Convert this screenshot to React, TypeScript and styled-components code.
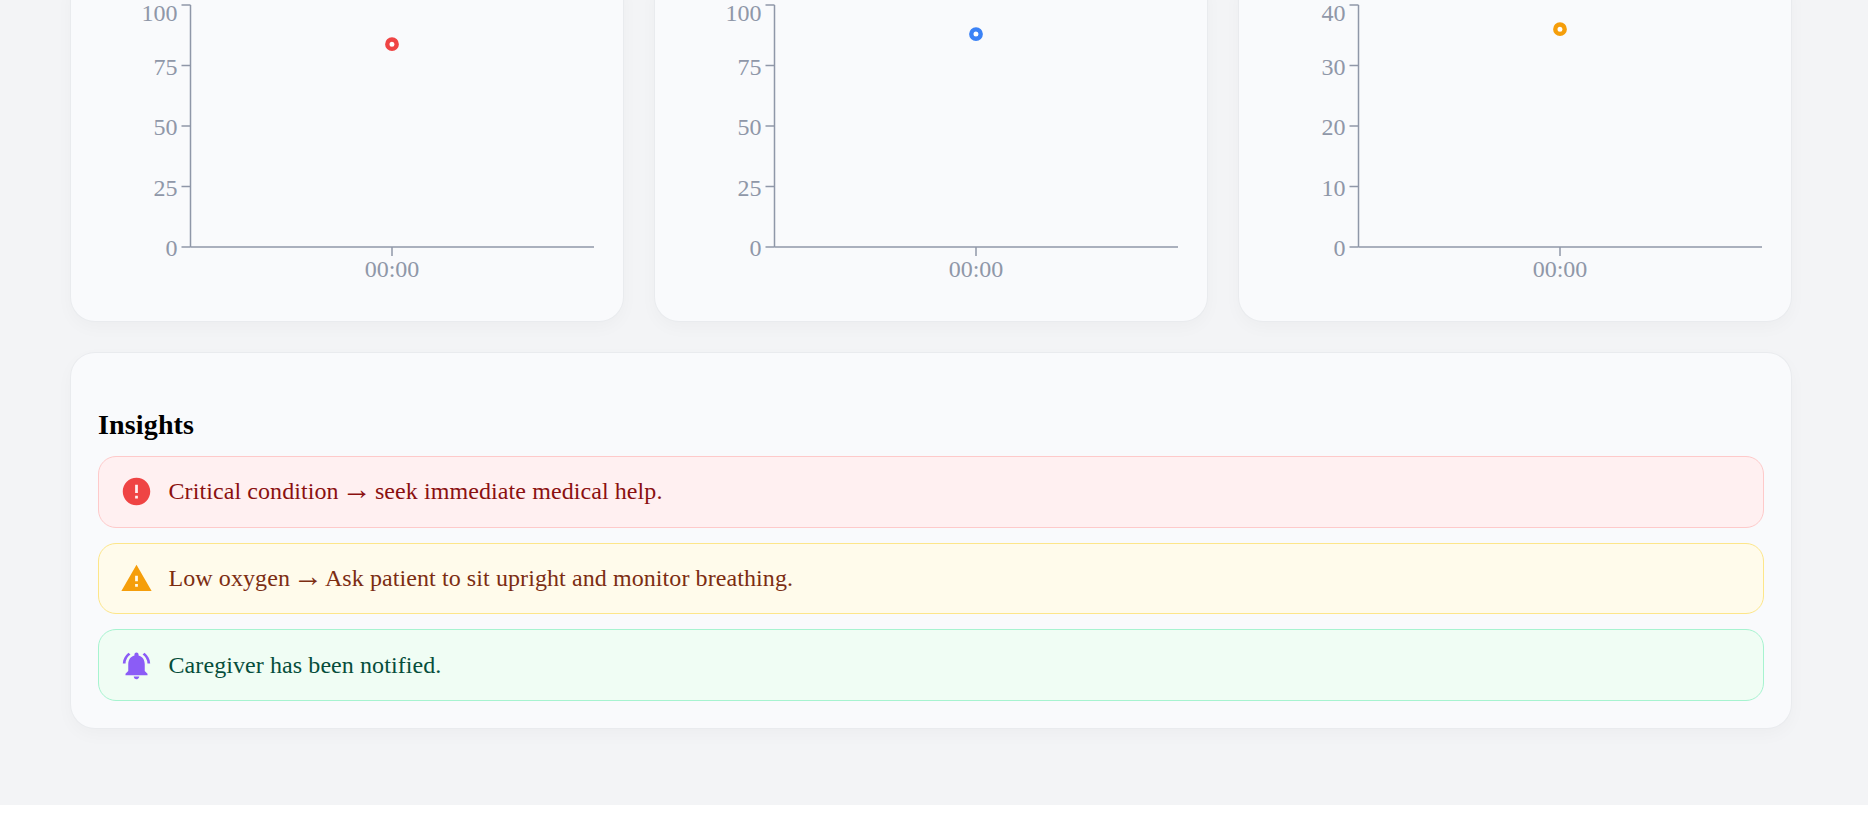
import styled, { createGlobalStyle } from "styled-components";
import { MdError, MdWarning, MdNotificationsActive } from "react-icons/md";

const GlobalStyle = createGlobalStyle`
  html, body {
    margin: 0;
    padding: 0;
    background: #fff;
  }
  body {
    font-family: "Liberation Serif", "Times New Roman", serif;
    overflow: hidden;
  }
`;

const AXIS = "#8f97a8";
const TOP = 5;
const BOTTOM = 247;
const AXIS_X = 92.5;
const AXIS_END = 496;
const POINT_X = 294;

type ChartProps = { max: number; step: number; value: number; color: string };

const Chart = ({ max, step, value, color }: ChartProps) => {
  const ticks: number[] = [];
  for (let t = 0; t <= max; t += step) ticks.push(t);
  const toY = (v: number) => BOTTOM - ((BOTTOM - TOP) * v) / max;

  return (
    <ChartSvg viewBox="0 0 498 294">
      <line x1={AXIS_X} y1={TOP} x2={AXIS_X} y2={BOTTOM} stroke={AXIS} strokeWidth={1.5} />
      <line x1={AXIS_X} y1={BOTTOM} x2={AXIS_END} y2={BOTTOM} stroke={AXIS} strokeWidth={1.5} />
      {ticks.map((t) => (
        <g key={t}>
          <line x1={AXIS_X - 9} y1={toY(t)} x2={AXIS_X} y2={toY(t)} stroke={AXIS} strokeWidth={1.5} />
          <TickLabel x={AXIS_X - 13} y={t === max ? toY(t) + 16 : toY(t) + 9} textAnchor="end">
            {t}
          </TickLabel>
        </g>
      ))}
      <line x1={POINT_X} y1={BOTTOM} x2={POINT_X} y2={BOTTOM + 9} stroke={AXIS} strokeWidth={1.5} />
      <TickLabel x={POINT_X} y={BOTTOM + 30} textAnchor="middle">
        00:00
      </TickLabel>
      <circle cx={POINT_X} cy={toY(value)} r={4.7} fill="#fff" stroke={color} strokeWidth={4.4} />
    </ChartSvg>
  );
};

const App = () => {
  return (
    <>
      <GlobalStyle />
      <Page>
        <ChartRow>
          <Card>
            <Chart max={100} step={25} value={83.8} color="#ef4444" />
          </Card>
          <Card>
            <Chart max={100} step={25} value={88} color="#3b82f6" />
          </Card>
          <Card>
            <Chart max={40} step={10} value={36} color="#f59e0b" />
          </Card>
        </ChartRow>
        <InsightsCard>
          <Heading>Insights</Heading>
          <AlertList>
            <Alert $bg="#fff0f1" $border="#fecaca" $text="#8b1010">
              <AlertIcon $color="#ef4444">
                <MdError />
              </AlertIcon>
              <span>
                Critical condition <Arrow>→</Arrow> seek immediate medical help.
              </span>
            </Alert>
            <Alert $bg="#fffbeb" $border="#fde68a" $text="#7c2d12">
              <AlertIcon $color="#f59e0b">
                <MdWarning />
              </AlertIcon>
              <span>
                Low oxygen <Arrow>→</Arrow> Ask patient to sit upright and monitor breathing.
              </span>
            </Alert>
            <Alert $bg="#f0fdf4" $border="#a7f3d0" $text="#064e3b">
              <AlertIcon $color="#8b5cf6">
                <MdNotificationsActive />
              </AlertIcon>
              <span>Caregiver has been notified.</span>
            </Alert>
          </AlertList>
        </InsightsCard>
      </Page>
    </>
  );
};

export default App;

const Page = styled.div`
  box-sizing: border-box;
  width: 1868px;
  height: 805px;
  padding: 0 77px 0 71px;
  background: #f3f4f6;
  overflow: hidden;
`;

const ChartRow = styled.div`
  display: grid;
  grid-template-columns: repeat(3, 1fr);
  gap: 31.75px;
  margin-top: -27px;
`;

const Card = styled.div`
  box-sizing: border-box;
  padding: 27px;
  height: 348px;
  background: #f9fafc;
  border-radius: 24px;
  box-shadow: 0 0 0 1px #e9ebee, 0 6px 18px rgba(0, 0, 0, 0.03);
`;

const ChartSvg = styled.svg`
  display: block;
  width: 498px;
  height: 294px;
`;

const TickLabel = styled.text`
  font-family: "Liberation Serif", "Times New Roman", serif;
  font-size: 24px;
  fill: #8f97a8;
`;

const InsightsCard = styled(Card)`
  height: auto;
  margin-top: 32px;
`;

const Heading = styled.h3`
  margin: 29px 0 15px;
  font-size: 28px;
  font-weight: 700;
  letter-spacing: 0.15px;
  color: #000;
`;

const AlertList = styled.div`
  display: flex;
  flex-direction: column;
  gap: 15px;
`;

const Alert = styled.div<{ $bg: string; $border: string; $text: string }>`
  display: flex;
  align-items: center;
  gap: 15.5px;
  padding: 18.35px 21px;
  background: ${(p) => p.$bg};
  border: 1px solid ${(p) => p.$border};
  border-radius: 18px;
  color: ${(p) => p.$text};
  font-size: 24px;
  letter-spacing: 0.085px;
`;

const Arrow = styled.span`
  margin: 0 -3px;
  font-size: 30px;
  line-height: 0;
`;

const AlertIcon = styled.span<{ $color: string }>`
  display: flex;
  font-size: 33px;
  color: ${(p) => p.$color};
`;
